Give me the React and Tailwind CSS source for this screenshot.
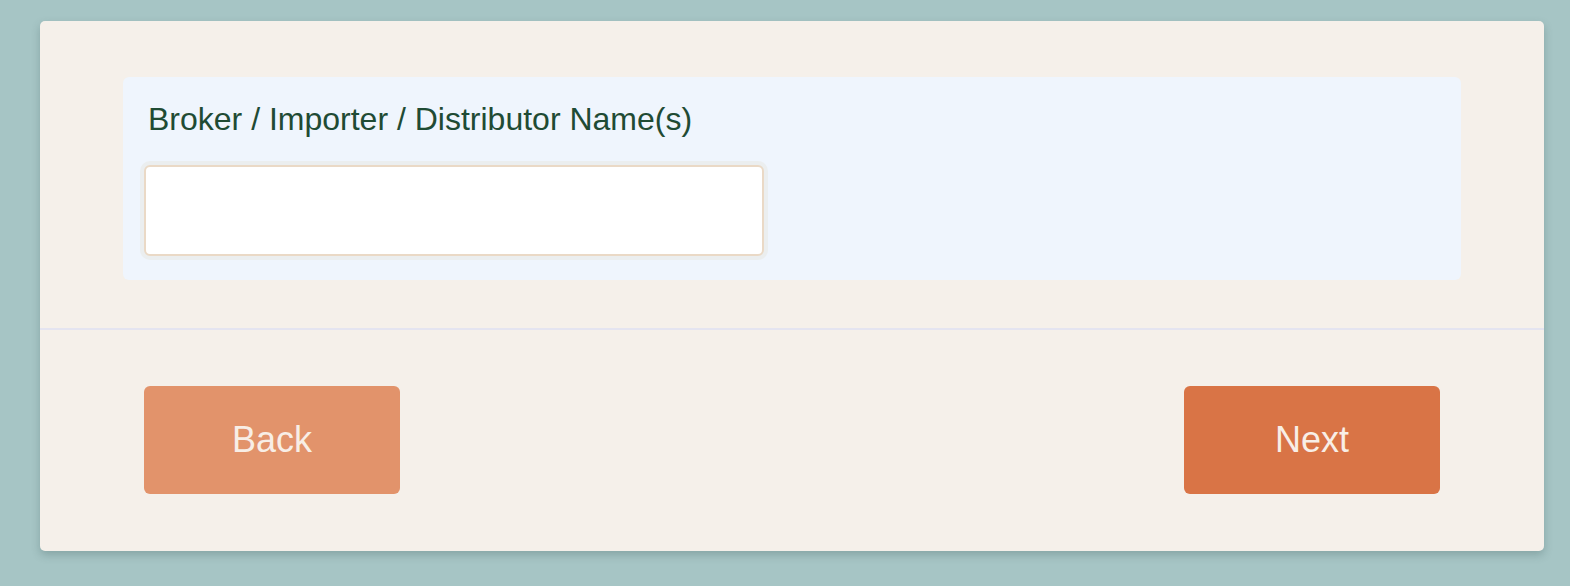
import React, { useState } from "react";

const font = { fontFamily: '"Liberation Sans", Arial, sans-serif' };

const App = () => {
  const [names, setNames] = useState("");

  return (
    <div
      className="min-h-screen w-full bg-[#a6c5c5] pt-[21px] pl-[40px] pb-[37px]"
      style={font}
    >
      <div className="w-[1504px] rounded-[5px] bg-[#f5f0ea] shadow-[0_4px_8px_rgba(40,70,70,0.25)]">
        {/* Question */}
        <div className="px-[83px] pt-[56px] pb-[48px]">
          <div className="rounded-[6px] bg-[#eff5fd] pl-[21px] pr-5 pt-6 pb-6">
            <label className="ml-1 block text-[32px] leading-[37px] text-[#1f4b34]">
              Broker / Importer / Distributor Name(s)
            </label>
            <input
              type="text"
              value={names}
              onChange={(e) => setNames(e.target.value)}
              className="mt-[27px] block h-[91px] w-[620px] rounded-[6px] border-2 border-[#ead9c6] bg-white px-4 text-[24px] text-[#1f4b34] shadow-[0_0_0_4px_#ebeeef] outline-none"
            />
          </div>
        </div>

        {/* Footer */}
        <div className="border-t-2 border-[#e4e4f0] flex items-center justify-between px-[104px] pt-[56px] pb-[57px]">
          <button className="h-[108px] w-[256px] rounded-[6px] bg-[#e2936b] text-[36px] text-[#f8eee6]">
            Back
          </button>
          <button className="h-[108px] w-[256px] rounded-[6px] bg-[#d97446] text-[36px] text-[#f8eee6]">
            Next
          </button>
        </div>
      </div>
    </div>
  );
};

export default App;
